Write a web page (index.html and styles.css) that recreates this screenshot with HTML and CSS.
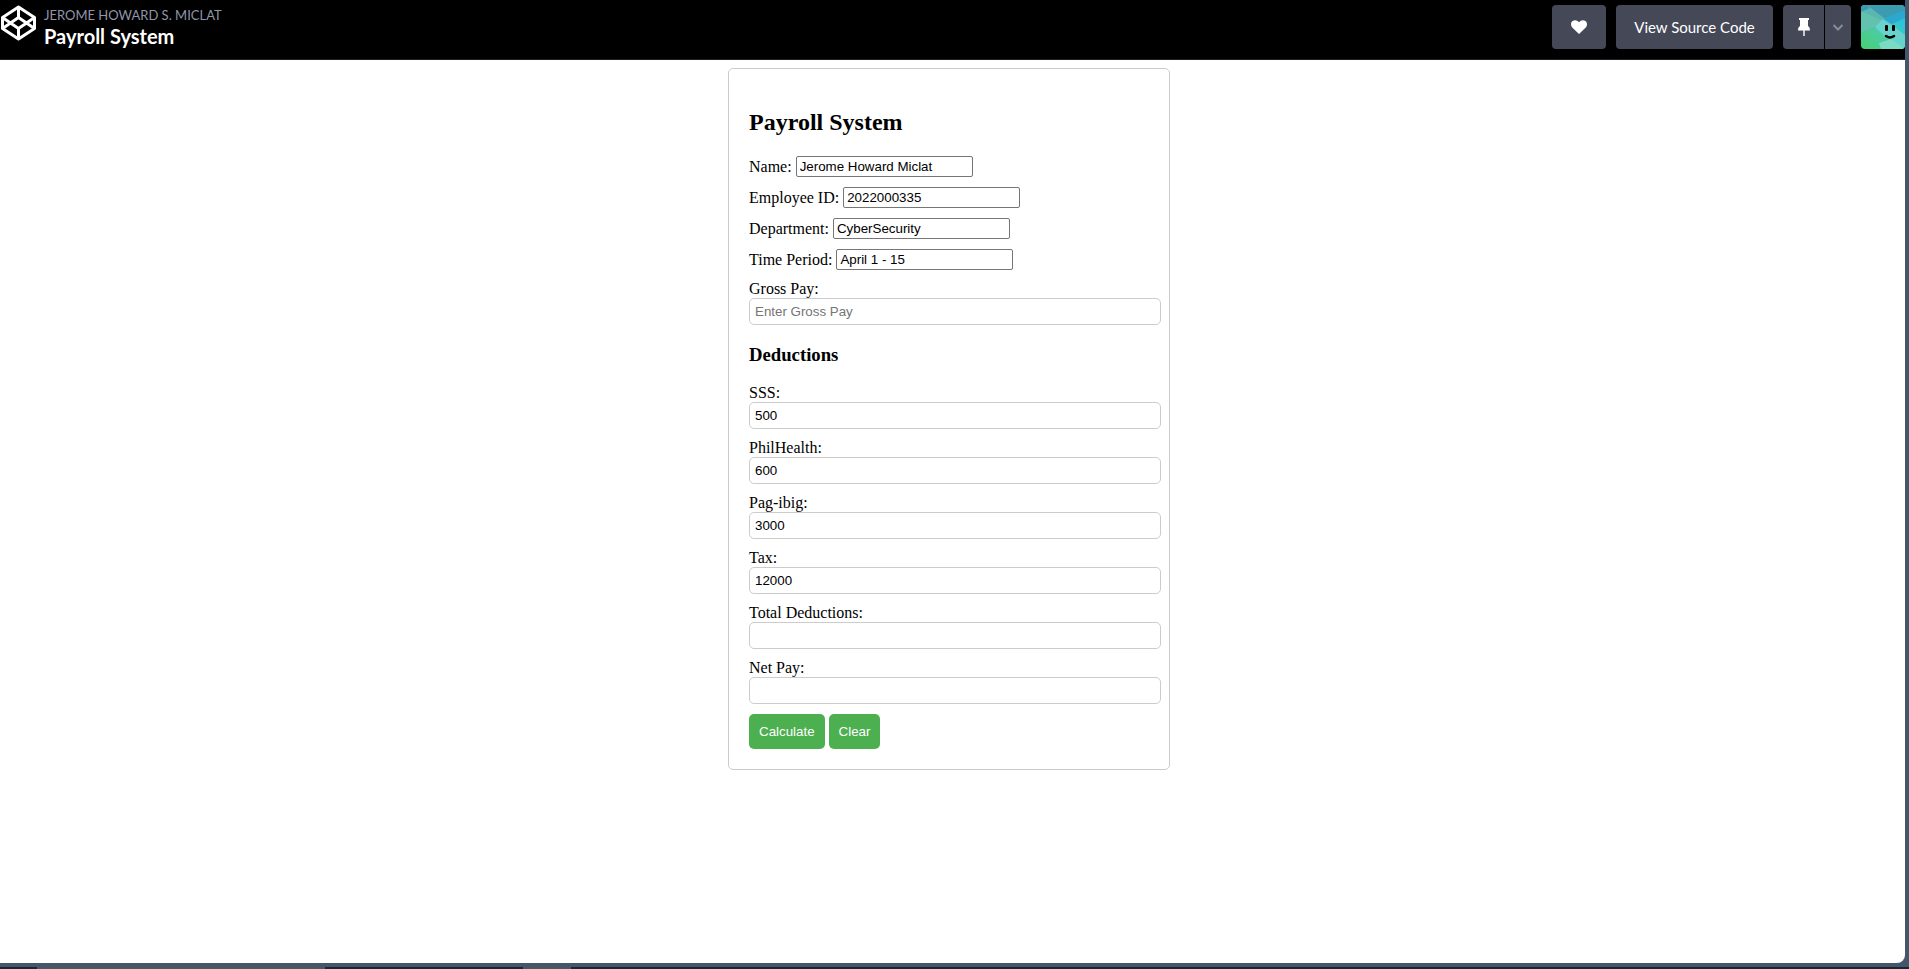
FILE: index.html
```html
<!DOCTYPE html>
<html lang="en">
<head>
<meta charset="utf-8">
<title>Payroll System</title>
<link rel="stylesheet" href="styles.css">
</head>
<body>
<div class="window">
  <header class="topbar">
    <a class="logo" href="#" aria-label="Home">
      <svg viewBox="0 0 37 36" width="37" height="36" fill="none" stroke="#fff" stroke-width="3" stroke-linejoin="round">
        <path d="M18.500 2 L34.500 12.500 V23.500 L18.500 34 L2.500 23.500 V12.500 Z"/>
        <path d="M2.500 12.500 L18.500 23.500 L34.500 12.500 M2.500 23.500 L18.500 12.500 L34.500 23.500 M18.500 2 V12.500 M18.500 23.500 V34"/>
      </svg>
    </a>
    <div class="titles">
      <a class="author" href="#">JEROME HOWARD S. MICLAT</a>
      <h1 class="pen-title">Payroll System</h1>
    </div>
    <div class="actions">
      <button class="btn btn-heart" type="button" aria-label="Love">
        <svg viewBox="0 0 16 14" width="16" height="14" fill="#fff"><path d="M8 14 L1.2 7.4 C-.5 5.600-.3 2.500 1.300 1.200 C3.300-.5 6.200-.1 8 2.300 C9.800-.1 12.700-.5 14.700 1.200 C16.300 2.500 16.500 5.600 14.800 7.400 Z"/></svg>
      </button>
      <button class="btn btn-source" type="button">View Source Code</button>
      <div class="split">
        <button class="btn btn-pin" type="button" aria-label="Pin">
          <svg viewBox="0 0 12 18" width="12" height="18" fill="#fff"><path d="M1 0 H11 V2 H10 V8 C11.300 9 12 10 12 12.500 H6.700 V18 H5.300 V12.500 H0 C0 10 .7 9 2 8 V2 H1 Z"/></svg>
        </button>
        <button class="btn btn-more" type="button" aria-label="More">
          <svg viewBox="0 0 12 8" width="12" height="8" fill="none" stroke="#868ca0" stroke-width="2"><path d="M1.500 2 L6 6.500 L10.500 2"/></svg>
        </button>
      </div>
      <a class="avatar" href="#" aria-label="Profile">
        <svg viewBox="0 0 44 44" width="44" height="44">
          <defs>
            <linearGradient id="sky" x1="0" y1="1" x2="1" y2="0"><stop offset="0" stop-color="#47cf73"/><stop offset=".5" stop-color="#4ecbb0"/><stop offset="1" stop-color="#0ebeff"/></linearGradient>
          </defs>
          <rect width="44" height="44" fill="url(#sky)"/>
          <path d="M0 0 H44 V6 L22 14 L6 0 Z" fill="#3b9bb0"/>
          <path d="M6 0 L32 20 L0 26 V0 Z" fill="#5db5b2"/>
          <path d="M0 6 L26 18 L0 27 Z" fill="#61c3ae"/>
          <path d="M0 0 H6 L9 3 L0 7 Z" fill="#3b9bb0"/>
          <path d="M22 14 L44 5 V13 L31 19 Z" fill="#2ba8cf"/>
          <path d="M22 14 L44 30 V44 H38 L14 22 Z" fill="#68d3cc"/>
          <path d="M18 38 L30 34 L44 44 H20 Z" fill="#7bdcc4"/>
          <g fill="#000"><rect x="24" y="20" width="3" height="6" rx="1"/><rect x="31" y="20" width="3" height="6" rx="1"/></g>
          <path d="M25 31 Q29 34 33 31" fill="none" stroke="#000" stroke-width="2.500" stroke-linecap="round"/>
        </svg>
      </a>
    </div>
  </header>
  <main class="page">
    <form class="payroll">
      <h2>Payroll System</h2>
      <div class="row"><label for="name">Name:</label> <input class="plain" id="name" type="text" value="Jerome Howard Miclat"></div>
      <div class="row"><label for="eid">Employee ID:</label> <input class="plain" id="eid" type="text" value="2022000335"></div>
      <div class="row"><label for="dept">Department:</label> <input class="plain" id="dept" type="text" value="CyberSecurity"></div>
      <div class="row"><label for="period">Time Period:</label> <input class="plain" id="period" type="text" value="April 1 - 15"></div>
      <div class="field"><label for="gross">Gross Pay:</label><input class="wide" id="gross" type="number" placeholder="Enter Gross Pay"></div>
      <h3>Deductions</h3>
      <div class="field"><label for="sss">SSS:</label><input class="wide" id="sss" type="number" value="500"></div>
      <div class="field"><label for="phil">PhilHealth:</label><input class="wide" id="phil" type="number" value="600"></div>
      <div class="field"><label for="pagibig">Pag-ibig:</label><input class="wide" id="pagibig" type="number" value="3000"></div>
      <div class="field"><label for="tax">Tax:</label><input class="wide" id="tax" type="number" value="12000"></div>
      <div class="field"><label for="total">Total Deductions:</label><input class="wide" id="total" type="number" readonly></div>
      <div class="field"><label for="net">Net Pay:</label><input class="wide" id="net" type="number" readonly></div>
      <div class="buttons"><button class="go" type="button">Calculate</button><button class="go" type="reset">Clear</button></div>
    </form>
  </main>
</div>
<footer class="taskbar"><span class="task task-open"></span><span class="task task-app"></span></footer>
</body>
</html>
```
FILE: styles.css
```css
* { box-sizing: border-box; }
body {
  margin: 0;
  min-height: 100vh;
  display: flex;
  flex-direction: column;
  background: #44566c;
  font-family: "Liberation Serif", "Times New Roman", serif;
  font-size: 16px;
  line-height: 18px;
  color: #000;
}
.window {
  flex: 1;
  margin: 0 4px 4px 0;
  background: #fff;
  border-bottom-right-radius: 8px;
  overflow: hidden;
}
.topbar {
  display: flex;
  align-items: flex-start;
  height: 60px;
  padding-top: 5px;
  background: #000;
  border-bottom: 1px solid #1e1f26;
  font-family: Lato, sans-serif;
}
.logo { display: block; height: 36px; }
.logo svg, .avatar svg, .btn svg { display: block; }
.titles { padding-left: 7px; }
.author {
  display: block;
  font-size: 13px;
  line-height: 20px;
  color: #9095a9;
  text-decoration: none;
}
.pen-title {
  margin: 0;
  font-size: 20px;
  line-height: 22px;
  font-weight: 700;
  color: #fff;
}
.actions { display: flex; gap: 10px; margin-left: auto; }
.btn {
  display: flex;
  align-items: center;
  justify-content: center;
  height: 44px;
  padding: 0;
  border: 0;
  border-radius: 4px;
  background: #444857;
  color: #fff;
  font-family: Lato, sans-serif;
  font-size: 15px;
}
.btn-heart { width: 54px; }
.btn-source { width: 157px; }
.split { display: flex; gap: 1px; }
.btn-pin { width: 41px; border-radius: 4px 0 0 4px; }
.btn-more { width: 26px; border-radius: 0 4px 4px 0; }
.avatar { display: block; height: 44px; border-radius: 4px; overflow: hidden; }
.page { padding: 8px 7px 8px 0; }
.payroll {
  width: 442px;
  margin: 0 auto;
  padding: 20px;
  border: 1px solid #ccc;
  border-radius: 5px;
}
h2 { margin: 20px 0; font-size: 24px; line-height: 27px; }
h3 { margin: 19px 0; line-height: 21px; }
.row { display: flex; align-items: center; gap: 4px; margin-bottom: 10px; }
.field { margin-bottom: 10px; }
.field label { display: block; }
input, .go { font-family: "Liberation Sans", Arial, sans-serif; }
.plain {
  width: 177px;
  height: 21px;
  padding: 1px 3px;
  border: 1px solid #767676;
  border-radius: 2px;
}
.wide {
  display: block;
  box-sizing: content-box;
  width: 100%;
  height: 15px;
  padding: 5px;
  border: 1px solid #ccc;
  border-radius: 5px;
  appearance: textfield;
}
.buttons { display: flex; gap: 4px; }
.go {
  height: 35px;
  padding: 10px;
  border: 0;
  border-radius: 5px;
  background: #4caf50;
  color: #fff;
}
.taskbar { display: flex; height: 2px; background: #1c242f; }
.task { height: 2px; background: #50555b; }
.task-open { width: 288px; margin-left: 37px; }
.task-app { width: 48px; margin-left: 198px; }
```
